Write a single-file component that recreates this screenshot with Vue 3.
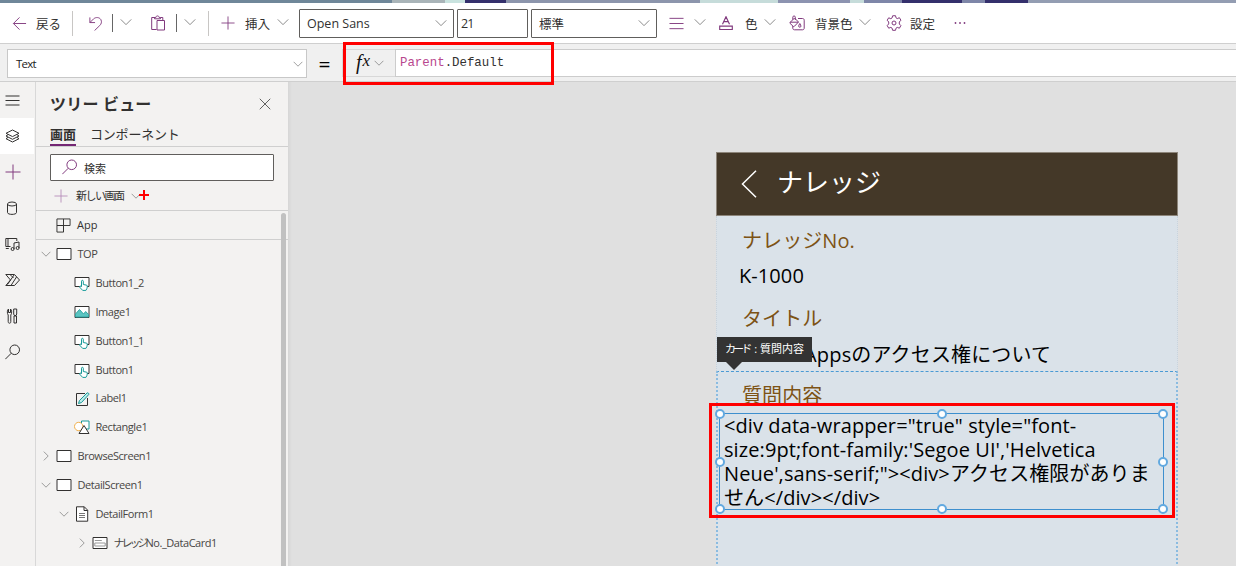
<template>
  <div class="studio">
    <div class="strip"></div>

    <header class="toolbar">
      <Icon name="back" :size="15" class="accent" />
      <span>戻る</span>
      <i class="sep"></i>
      <Icon name="undo" :size="15" class="accent" />
      <i class="sep dark"></i>
      <Icon name="down" :size="12" class="chev" />
      <Icon name="paste" :size="16" class="accent" />
      <i class="sep dark"></i>
      <Icon name="down" :size="12" class="chev" />
      <i class="sep"></i>
      <Icon name="plus" :size="14" class="accent" />
      <span>挿入</span>
      <Icon name="down" :size="12" class="chev" />
      <div class="box font-box"><span>Open Sans</span><Icon name="down" :size="12" class="chev" /></div>
      <div class="box size-box"><span>21</span></div>
      <div class="box weight-box"><span>標準</span><Icon name="down" :size="12" class="chev" /></div>
      <Icon name="lines" :size="15" class="accent" />
      <Icon name="down" :size="12" class="chev" />
      <Icon name="fontColor" :size="14" class="accent" />
      <span>色</span>
      <Icon name="down" :size="12" class="chev" />
      <Icon name="bucket" :size="16" class="accent" />
      <span>背景色</span>
      <Icon name="down" :size="12" class="chev" />
      <Icon name="gear" :size="16" class="accent" />
      <span>設定</span>
      <Icon name="dots" :size="12" class="dots" />
    </header>

    <div class="formula-bar">
      <div class="property"><span>Text</span><Icon name="down" :size="10" class="chev" /></div>
      <span class="equals">=</span>
      <div class="fx"><em>f</em><em class="x">x</em><Icon name="down" :size="10" class="chev" /></div>
      <div class="formula"><b>Parent</b>.Default</div>
      <div class="mark mark-formula"></div>
    </div>

    <main class="work">
      <nav class="rail">
        <div v-for="r in rail" :key="r.icon" class="rail-item" :class="{ active: r.active }">
          <Icon :name="r.icon" :size="16" :class="r.tone" />
        </div>
      </nav>

      <aside class="tree">
        <div class="tree-head">
          <h2>ツリー ビュー</h2>
          <Icon name="close" :size="12" class="close" />
        </div>
        <div class="tabs">
          <span class="tab on">画面</span>
          <span class="tab">コンポーネント</span>
        </div>
        <div class="search"><Icon name="search" :size="16" class="accent" /><span>検索</span></div>
        <div class="new-screen">
          <Icon name="plus" :size="14" class="soft" />
          <span>新しい画面</span>
          <Icon name="down" :size="10" class="chev" />
          <i class="cross"></i>
        </div>
        <div class="app-row"><Icon name="app" :size="15" /><span>App</span></div>
        <div class="nodes">
          <div v-for="n in nodes" :key="n.label" class="node" :class="'depth' + n.depth">
            <span class="toggle"><Icon v-if="n.toggle" :name="n.toggle" :size="10" class="chev" /></span>
            <Icon :name="n.icon" :size="16" />
            <span class="node-label"><span v-if="n.kana" class="kana">{{ n.kana }}</span>{{ n.label }}</span>
          </div>
        </div>
        <div class="scrollbar"></div>
      </aside>

      <section class="canvas">
        <div class="screen">
          <div class="screen-head">
            <svg class="chevron-left" viewBox="0 0 16 28"><path d="M15 .8 1.5 14 15 27.2" /></svg>
            <h1>ナレッジ</h1>
          </div>
          <div class="card">
            <p class="label">ナレッジNo.</p>
            <p class="value">K-1000</p>
          </div>
          <div class="card">
            <p class="label">タイトル</p>
            <p class="value title-value">Power Appsのアクセス権について</p>
          </div>
          <div class="card selected">
            <div class="tip"><span class="kana">カード</span> : 質問内容</div>
            <p class="label">質問内容</p>
            <div class="textbox">
              <div v-for="(line, i) in lines" :key="i" class="line">{{ line }}</div>
              <i v-for="h in handles" :key="h" class="handle" :class="h"></i>
              <div class="mark mark-text"></div>
            </div>
          </div>
        </div>
      </section>
    </main>
  </div>
</template>

<script setup>
import { h } from 'vue'

// 16x16 のアイコン定義
const icons = {
  back: '<path d="M8 1.500 1.500 8 8 14.500M1.500 8H15"/>',
  undo: '<path d="M2 1.500v5.500h5.500M2 7 6 3c2.500-2 6-1.800 7.700.8 1.300 2.500.5 4.700-1.200 6.400L7 15.500"/>',
  down: '<path d="m1 4.500 7 7 7-7"/>',
  right: '<path d="m4.500 1 7 7-7 7"/>',
  paste: '<path d="M5 2.500H1.700v12H6.500M4.500 3.800V2.500h1.300C6 .4 9 .4 9.200 2.500h1.300v1.300zM10.500 2.500h2.300V5M7 5.500h7.500v9.500H7z"/>',
  plus: '<path d="M8 .5v15M.5 8h15"/>',
  lines: '<path d="M.5 2.500h15M.5 8h15M.5 13.500h15"/>',
  fontColor: '<path stroke-width="1.300" d="M4 9.500 8 .8l4 8.700M5.300 6.500h5.400M.8 11.500h14.400v4H.8z"/>',
  bucket:
    '<path d="M9 3.500h4.500c1 0 1.700.6 1.700 1.700v8c0 1-.7 1.600-1.700 1.600H5.500c-1 0-1.700-.6-1.700-1.600V11"/><path d="M1 7.500 5.500 3l4 4L5.500 11.200c-.5.5-1 .5-1.500 0L1 8.300zM3.800 4.700V2.200c0-1.700 2.500-1.700 2.500 0V5M1 7.200h8.300M10.800 8.500c-1.500 2.300-1.500 3.700 0 3.700s1.500-1.400 0-3.700z"/>',
  gear:
    '<circle cx="8" cy="8" r="2"/><path stroke-linejoin="round" d="m6.600.8-.5 2.100-1.300.8-2.100-.9L1.200 5.200 2.700 7v1.900l-1.500 1.700 1.500 2.600 2.100-.8 1.300.8.5 2.100h2.900l.5-2.100 1.300-.8 2.100.8 1.500-2.600L13.300 9V7l1.600-1.800-1.500-2.500-2.100.9-1.300-.8-.5-2.100z"/>',
  dots: '<circle cx="2" cy="8" r="1.200"/><circle cx="8" cy="8" r="1.200"/><circle cx="14" cy="8" r="1.200"/>',
  close: '<path d="m1 1 14 14M15 1 1 15"/>',
  menu: '<path stroke-width="1.200" d="M.5 4h14M.5 8.500h14M.5 13h14"/>',
  layers:
    '<path d="M7.500 2 14 5.300 7.500 8.600 1 5.300zM3 6.700 1 8l6.500 3.300L14 8l-2-1.300M3 9.400l-2 1.300L7.500 14l6.500-3.300-2-1.300"/>',
  data: '<ellipse cx="7" cy="4" rx="4.500" ry="2"/><path d="M2.500 4v8.500c0 2.500 9 2.500 9 0V4"/>',
  media:
    '<path d="M5.500 10.500H.8V2.500h11V5M3 2.500v8M.8 12.500h3"/><path d="M9 13V7l5-1v6"/><circle cx="7.600" cy="13" r="1.500"/><circle cx="12.600" cy="12" r="1.500"/>',
  flow:
    '<path d="M.8 2.500h8.700l5 5.500-5 5.500H.8L5.500 8zM5 2.500 8.500 6M9 3 2.500 12.500M11.500 5 6 13.500"/>',
  tools:
    '<path d="M4.500 15.200c-1 0-1.300-.8-1.300-1.500V7C2 5.500 2 2 3.500 1v3.500h2V1C7 2 7 5.500 5.800 7v6.700c0 .8-.3 1.500-1.300 1.500zM8.700 1h3v5l-.6 1.500H9.300L8.700 6zM9 8h2.500v7H9z"/>',
  search: '<circle cx="9.700" cy="5.800" r="4.800"/><path d="M6.300 9.200.3 15.200"/>',
  app: '<path d="M1 1h14v7H1zM1 8h7v7H1zM8 1v7M8 8v7"/>',
  screen: '<path fill="#fff" d="M1 2.500h14v11H1z"/>',
  button:
    '<path fill="#fff" d="M1 2.500h14v9H1z"/><path fill="#fff" stroke="#169a98" d="M7.500 11V6.200c0-1.200 1.800-1.200 1.800 0v3.300l3.500.7c.8.300.7 3-.9 5.200H8.700L5.500 12c.2-1 1-1.100 2-.5z"/>',
  image:
    '<path fill="#fff" d="M1 2.500h14v11H1z"/><path fill="#5bc5c2" stroke="#31a5a3" d="m1.500 10 4-4.500 4 4.500 2.200-2.500 2.800 3v2.500h-13z"/>',
  text:
    '<path d="M11 2.500H2.500v12h11V7"/><path fill="#bfeceb" stroke="#169a98" d="m4.500 12.500 1-3L13 2c.8-.8 2.500.7 1.700 1.600L7.500 11.500z"/>',
  shape:
    '<path fill="#fff" stroke="#169a98" d="M7.500 2h7.500v8H7.500z"/><circle fill="#fff" stroke="#f0b04c" cx="4.700" cy="7.500" r="4.200"/><path fill="#fff" d="m10 6.500-5 8h10z"/>',
  form:
    '<path fill="#fff" d="M2.500.8h7.800l3.400 3.400v11H2.500zM10 .8v3.700h3.700"/><path stroke="#777" d="M5 7.500h6M5 9.500h6M5 11.500h6"/>',
  card:
    '<path fill="#fff" d="M1 2.500h14v11H1z"/><path stroke="#999" d="M2.800 5.500h7M2.800 8h10.400v3H2.800z"/>'
}

const Icon = (props) =>
  h('svg', {
    viewBox: '0 0 16 16',
    width: props.size,
    height: props.size,
    fill: 'none',
    stroke: 'currentColor',
    innerHTML: icons[props.name]
  })
Icon.props = ['name', 'size']

const rail = [
  { icon: 'menu' },
  { icon: 'layers', active: true },
  { icon: 'plus', tone: 'accent' },
  { icon: 'data' },
  { icon: 'media' },
  { icon: 'flow' },
  { icon: 'tools' },
  { icon: 'search' }
]

const nodes = [
  { label: 'TOP', icon: 'screen', depth: 0, toggle: 'down' },
  { label: 'Button1_2', icon: 'button', depth: 1 },
  { label: 'Image1', icon: 'image', depth: 1 },
  { label: 'Button1_1', icon: 'button', depth: 1 },
  { label: 'Button1', icon: 'button', depth: 1 },
  { label: 'Label1', icon: 'text', depth: 1 },
  { label: 'Rectangle1', icon: 'shape', depth: 1 },
  { label: 'BrowseScreen1', icon: 'screen', depth: 0, toggle: 'right' },
  { label: 'DetailScreen1', icon: 'screen', depth: 0, toggle: 'down' },
  { label: 'DetailForm1', icon: 'form', depth: 1, toggle: 'down' },
  { kana: 'ナレッジ', label: 'No._DataCard1', icon: 'card', depth: 2, toggle: 'right' },
  { label: '', icon: 'card', depth: 2 }
]

const lines = [
  '<div data-wrapper="true" style="font-',
  "size:9pt;font-family:'Segoe UI','Helvetica",
  'Neue\',sans-serif;"><div>アクセス権限がありま',
  'せん</div></div>'
]

const handles = ['tl', 'tc', 'tr', 'ml', 'mr', 'bl', 'bc', 'br']
</script>

<style>
body {
  overflow: hidden;
}
</style>

<style scoped>
.studio {
  display: flex;
  flex-direction: column;
  width: 1236px;
  height: 566px;
  overflow: hidden;
  font-family: 'Open Sans', 'Noto Sans CJK JP', sans-serif;
  font-size: 12px;
  color: #323130;
  background: #e0e0e0;
}
svg {
  display: block;
  flex: none;
}
.accent {
  color: #813a7e;
}
.soft {
  color: #b58ab8;
}
.chev {
  color: #666;
}
.strip {
  flex: none;
  height: 3px;
  background: linear-gradient(90deg, #6f8799 0 392px, #a9b4b8 392px 445px, #c9e3df 445px 465px, #34306c 465px 506px, #8c95ac 506px 700px, #c6dcda 700px 778px, #8c93b0 778px 850px, #c6dcda 850px 864px, #7e86a8 864px 902px, #34306c 902px 962px, #7e86a8 962px 985px, #34306c 985px 1028px, #939db2 1028px);
}

/* ツールバー */
.toolbar {
  display: grid;
  grid-template-columns: 23px 36px 17px 23px 9px 30px 25px 9px 23px 14px 23px 33px 21px 158px 74px 139px 25px 25px 25px 20px 25px 25px 45px 27px 23px 45px auto;
  align-items: center;
  justify-items: start;
  flex: none;
  height: 41px;
  padding-left: 13px;
  box-sizing: border-box;
  border-bottom: 1px solid #cfcfcf;
  background: #fff;
  font-size: 12.5px;
  white-space: nowrap;
}
.toolbar > svg {
  margin-left: -1px;
}
.toolbar > svg.chev {
  margin-top: -2px;
}
.sep {
  width: 1px;
  height: 25px;
  background: #c8c6c4;
}
.sep.dark {
  height: 18px;
  background: #666;
}
.box {
  display: flex;
  align-items: center;
  justify-content: space-between;
  box-sizing: border-box;
  height: 29px;
  padding: 0 6px 0 7px;
  border: 1px solid #605e5c;
  border-radius: 1px;
}
.font-box {
  width: 155px;
}
.size-box {
  width: 71px;
  padding-left: 3px;
  letter-spacing: -0.8px;
}
.weight-box {
  width: 126px;
}
.dots :deep(circle) {
  fill: #813a7e;
  stroke: none;
}

/* 数式バー */
.formula-bar {
  position: relative;
  z-index: 3;
  display: flex;
  align-items: flex-start;
  flex: none;
  height: 38px;
  padding: 5px 0 0 7px;
  box-sizing: border-box;
  border-bottom: 1px solid #cfcfcf;
  background: #f0f0f0;
}
.property {
  display: flex;
  align-items: center;
  justify-content: space-between;
  box-sizing: border-box;
  width: 300px;
  height: 29px;
  padding: 0 3px 0 8px;
  border: 1px solid #c8c8c8;
  background: #fff;
  color: #222;
  font-size: 11.5px;
  letter-spacing: -0.8px;
}
.equals {
  width: 35px;
  text-align: center;
  font-size: 21px;
  line-height: 31px;
  color: #000;
}
.fx {
  display: flex;
  align-items: center;
  box-sizing: border-box;
  width: 53px;
  height: 28px;
  padding-left: 13px;
  border: 1px solid #d8d8d8;
  border-right: 0;
}
.fx em {
  padding-bottom: 3px;
  font-family: 'Liberation Serif', serif;
  font-size: 20px;
  line-height: 20px;
  color: #111;
}
.fx .x {
  margin: 0 4px 0 1px;
  padding-bottom: 4px;
  font-size: 17px;
}
.formula {
  flex: 1;
  box-sizing: border-box;
  height: 28px;
  padding-left: 4px;
  border: 1px solid #ccc;
  border-right: 0;
  background: #fff;
  font-family: 'Liberation Mono', monospace;
  font-size: 12.4px;
  line-height: 27px;
}
.formula b {
  font-weight: normal;
  color: #b8478e;
}
.mark {
  position: absolute;
  box-sizing: border-box;
  border: 3px solid #f00;
}
.mark-formula {
  left: 343px;
  top: -2px;
  width: 211px;
  height: 43px;
}

.work {
  display: flex;
  flex: 1;
  min-height: 0;
}
.rail {
  flex: none;
  width: 35px;
  border-right: 1px solid #d8d8d8;
  background: #f3f2f1;
}
.rail-item {
  display: flex;
  align-items: center;
  width: 34px;
  height: 36px;
  padding-left: 5px;
  box-sizing: border-box;
}
.rail-item.active {
  background: #fff;
}

/* ツリー ビュー */
.tree {
  position: relative;
  flex: none;
  width: 252px;
  overflow: hidden;
  background: #f3f2f1;
}
.tree-head {
  display: flex;
  align-items: center;
  justify-content: space-between;
  height: 43px;
  padding: 0 17px 0 14px;
}
h2 {
  margin: 0 0 2px;
  font-size: 16px;
  font-weight: 700;
  letter-spacing: 0.2px;
}
.tabs {
  display: flex;
  gap: 14px;
  height: 22px;
  padding-left: 14px;
  box-sizing: border-box;
  border-bottom: 1px solid #cfcfcf;
}
.tab {
  font-size: 13px;
  line-height: 18px;
  letter-spacing: -0.2px;
}
.tab.on {
  height: 19px;
  border-bottom: 2px solid #742774;
  font-weight: 700;
  letter-spacing: 0;
}
.search {
  display: flex;
  align-items: center;
  gap: 6px;
  box-sizing: border-box;
  width: 224px;
  height: 27px;
  margin: 7px 0 0 14px;
  padding-left: 11px;
  border: 1px solid #605e5c;
  border-radius: 1px;
  background: #fff;
  font-size: 11px;
}
.search svg {
  margin-bottom: 2px;
}
.new-screen {
  display: flex;
  align-items: center;
  height: 29px;
  padding-left: 18px;
  border-bottom: 1px solid #cfcfcf;
  font-size: 11px;
}
.new-screen span {
  width: 55px;
  margin-left: 8px;
  padding-bottom: 2px;
  letter-spacing: -1.5px;
  white-space: nowrap;
}
.cross {
  width: 10px;
  height: 10px;
  margin: 0 0 2px -2px;
  background: linear-gradient(#f00, #f00) center / 10px 2px no-repeat, linear-gradient(#f00, #f00) center / 2px 10px no-repeat;
}
.app-row {
  display: flex;
  align-items: center;
  gap: 6px;
  height: 28px;
  padding-left: 20px;
  border-bottom: 1px solid #cfcfcf;
  font-size: 11px;
}
.app-row span {
  padding-bottom: 2px;
}
.node {
  display: flex;
  align-items: center;
  height: 28.85px;
  padding-left: 5px;
}
.depth1 {
  padding-left: 23px;
}
.depth2 {
  padding-left: 41px;
}
.toggle {
  width: 15px;
}
.node-label {
  margin-left: 5.5px;
  padding-bottom: 1.5px;
  font-size: 11px;
  letter-spacing: -0.45px;
  color: #484644;
  white-space: nowrap;
}
.kana {
  letter-spacing: -2.8px;
  margin-right: 2px;
}
.node-label .kana {
  letter-spacing: -3px;
  margin-right: 0;
}
.scrollbar {
  position: absolute;
  top: 131px;
  right: 2px;
  width: 5px;
  height: 360px;
  border-radius: 3px;
  background: #c1c1c1;
}

/* キャンバス */
.canvas {
  flex: 1;
  padding: 70px 0 0 428px;
  background: linear-gradient(90deg, #d6d6d6, #e0e0e0 4px);
}
.screen {
  width: 462px;
  height: 420px;
  background: #dae2e9;
}
.screen-head {
  display: flex;
  align-items: center;
  gap: 20px;
  box-sizing: border-box;
  height: 64px;
  padding-left: 24px;
  border: 1px solid #8d857a;
  background: #443828;
}
.chevron-left {
  width: 16px;
  height: 28px;
  fill: none;
  stroke: #fff;
  stroke-width: 1.5;
}
h1 {
  margin: 0 0 4px;
  font-size: 26px;
  font-weight: 400;
  line-height: 34px;
  color: #fff;
}
.card {
  box-sizing: border-box;
  height: 77.5px;
  padding-top: 11px;
  border: 1px dotted #c9d3dc;
  border-width: 0 1px;
}
.card p {
  margin: 0;
  font-size: 20px;
  line-height: 28px;
  letter-spacing: 0.08px;
  white-space: nowrap;
}
.card .label {
  padding-left: 25px;
  color: #7d5315;
}
.card .value {
  padding: 7px 0 0 22px;
  color: #000;
}
.card .title-value {
  padding-top: 8px;
  letter-spacing: 0.15px;
}
.card.selected {
  position: relative;
  height: 220px;
  padding-top: 10px;
  border: 2px dotted #8abbe0;
  border-top: 1px dashed #4a9ad4;
}
.tip {
  position: absolute;
  left: -1px;
  top: -35px;
  width: 95px;
  height: 25px;
  background: #333;
  color: #fff;
  font-size: 11px;
  line-height: 24px;
  text-align: center;
  white-space: nowrap;
}
.tip::after {
  content: '';
  position: absolute;
  left: 9px;
  top: 25px;
  border: 8px solid transparent;
  border-top-color: #333;
}
.card.selected .label {
  padding-left: 24px;
}
.textbox {
  position: relative;
  box-sizing: border-box;
  width: 445px;
  height: 97px;
  margin: 3px 0 0 1px;
  padding-left: 4px;
  border: 1px solid #3d8fce;
}
.line {
  height: 24px;
  font-size: 20px;
  line-height: 24px;
  letter-spacing: 0.09px;
  color: #000;
  white-space: nowrap;
}
.handle {
  position: absolute;
  box-sizing: border-box;
  width: 10px;
  height: 10px;
  margin: -5px;
  border: 2px solid #62a9e0;
  border-radius: 50%;
  background: #fff;
}
.tl, .tc, .tr { top: 0; }
.ml, .mr { top: 50%; }
.bl, .bc, .br { top: 100%; }
.tl, .ml, .bl { left: 0; }
.tc, .bc { left: 50%; }
.tr, .mr, .br { left: 100%; }
.mark-text {
  left: -11px;
  top: -11px;
  width: 466px;
  height: 115px;
}
</style>
